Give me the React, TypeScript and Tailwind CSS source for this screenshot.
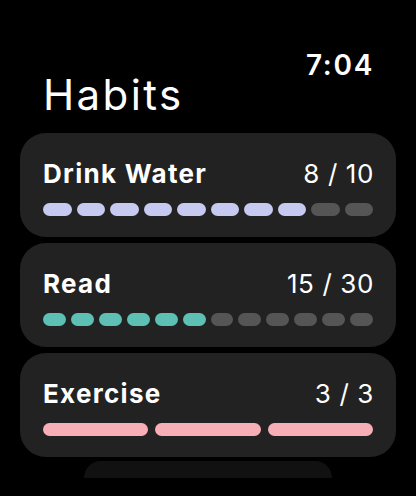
import React from "react";

type Habit = {
  name: string;
  done: number;
  total: number;
  segments: number;
  filled: number;
  color: string;
  gap: string;
};

const habits: Habit[] = [
  { name: "Drink Water", done: 8, total: 10, segments: 10, filled: 8, color: "bg-[#c7caf0]", gap: "gap-[5px]" },
  { name: "Read", done: 15, total: 30, segments: 12, filled: 6, color: "bg-[#5ec0b4]", gap: "gap-[5px]" },
  { name: "Exercise", done: 3, total: 3, segments: 3, filled: 3, color: "bg-[#f8aeb6]", gap: "gap-[7px]" },
];

function HabitCard({ h }: { h: Habit }) {
  return (
    <div className="w-[376px] h-[104px] rounded-[26px] bg-[#222222] px-[23px] pt-[26px] flex flex-col">
      <div className="flex items-baseline justify-between h-[30px] leading-[30px] text-white">
        <span className="text-[26px] font-bold tracking-[1.3px]">{h.name}</span>
        <span className="text-[26px] font-normal tracking-[0.6px] -mr-[1px]">
          {h.done} / {h.total}
        </span>
      </div>
      <div className={`mt-[14px] flex ${h.gap}`}>
        {Array.from({ length: h.segments }).map((_, i) => (
          <div
            key={i}
            className={`flex-1 h-[13px] rounded-full ${i < h.filled ? h.color : "bg-[#555555]"}`}
          />
        ))}
      </div>
    </div>
  );
}

export default function App() {
  return (
    <div
      className="w-[416px] h-[496px] bg-black overflow-hidden flex flex-col"
      style={{ fontFamily: "Inter, 'Noto Sans', sans-serif" }}
    >
      <div className="pt-[51px] pr-[42px] flex justify-end">
        <span className="text-white text-[28px] font-semibold leading-[28px] tracking-[1.7px]">7:04</span>
      </div>
      <div className="pl-[43px] text-white text-[42px] font-normal leading-[32px] tracking-[2.4px]">Habits</div>
      <div className="mt-[22px] flex flex-col items-center gap-[6px]">
        {habits.map((h) => (
          <HabitCard key={h.name} h={h} />
        ))}
        <div className="-mt-[2px] w-[248px] h-[17px] bg-[#111111] rounded-t-[18px]" />
      </div>
    </div>
  );
}
